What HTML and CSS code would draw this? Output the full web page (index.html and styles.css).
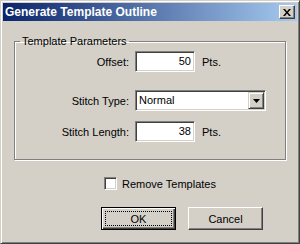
FILE: index.html
```html
<!DOCTYPE html>
<html lang="en">
<head>
  <meta charset="UTF-8" />
  <title>Generate Template Outline</title>
  <link rel="stylesheet" href="styles.css">
</head>
<body>

<div class="window">
  <div class="titlebar">
    <span class="title">Generate Template Outline</span>
    <button class="close-btn" aria-label="Close">
      <svg width="8" height="7" viewBox="0 0 8 7"><path d="M0 0h2l2 2.5 2-2.5h2l-3 3.5 3 3.5h-2l-2-2.5-2 2.5h-2l3-3.5z"/></svg>
    </button>
  </div>

  <div class="dialog-body">
    <fieldset class="group">
      <legend>Template Parameters</legend>

      <div class="field-row field-row-first">
        <label class="field-label">Offset:</label>
        <div class="edit">50</div>
        <span class="unit">Pts.</span>
      </div>

      <div class="field-row field-row-second">
        <label class="field-label">Stitch Type:</label>
        <div class="combo">
          <span class="combo-value">Normal</span>
          <span class="combo-btn">
            <svg width="7" height="4" viewBox="0 0 7 4"><path d="M0 0h7l-3.5 4z"/></svg>
          </span>
        </div>
      </div>

      <div class="field-row">
        <label class="field-label">Stitch Length:</label>
        <div class="edit">38</div>
        <span class="unit">Pts.</span>
      </div>
    </fieldset>

    <label class="check-row">
      <span class="checkbox"></span>
      Remove Templates
    </label>

    <div class="buttons">
      <button class="btn btn-default"><span class="focus-ring">OK</span></button>
      <button class="btn"><span class="btn-label">Cancel</span></button>
    </div>
  </div>
</div>

</body>
</html>
```

FILE: styles.css
```css
body {
  margin: 0;
  background: #d4d0c8;
}

.window {
  width: 300px;
  height: 244px;
  box-sizing: border-box;
  background: #d4d0c8;
  border: 1px solid;
  border-color: #d4d0c8 #404040 #404040 #d4d0c8;
  box-shadow: inset 1px 1px #fff, inset -1px -1px #808080;
  padding: 2px;
  display: flex;
  flex-direction: column;
  font: 11px "Liberation Sans", Arial, sans-serif;
  color: #000;
}

.titlebar {
  height: 18px;
  flex: none;
  display: flex;
  align-items: center;
  justify-content: space-between;
  padding: 0 2px;
  background: linear-gradient(to right, #0a246a, #a6caf0);
}

.title {
  color: #fff;
  font-weight: bold;
  font-size: 12px;
}

.close-btn {
  width: 16px;
  height: 14px;
  padding: 0;
  background: #d4d0c8;
  border: 1px solid;
  border-color: #fff #404040 #404040 #fff;
  box-shadow: inset -1px -1px #808080;
  display: flex;
  align-items: center;
  justify-content: center;
}

.dialog-body {
  display: flex;
  flex-direction: column;
  padding: 0 11px;
}

.group {
  width: 272px;
  box-sizing: border-box;
  margin: 14px 0 0;
  padding: 3px 0 17px;
  border: 1px solid #808080;
  box-shadow: inset 1px 1px #fff, 1px 1px #fff;
}

.group legend {
  margin-left: 5px;
  padding: 0 2px;
  line-height: 13px;
}

.field-row {
  display: flex;
  align-items: center;
  height: 21px;
  margin-bottom: 10px;
}

.field-row:last-child {
  margin-bottom: 0;
}

.field-row-first {
  margin-bottom: 18px;
}

.field-label {
  width: 114px;
  text-align: right;
  margin-right: 6px;
}

.edit,
.combo {
  height: 21px;
  box-sizing: border-box;
  background: #fff;
  border: 1px solid;
  border-color: #808080 #fff #fff #808080;
  box-shadow: inset 1px 1px #404040, inset -1px -1px #d4d0c8;
  padding: 1px;
}

.edit {
  width: 60px;
  text-align: right;
  padding-right: 3px;
  line-height: 17px;
}

.unit {
  margin-left: 7px;
}

.combo {
  width: 131px;
  display: flex;
  align-items: stretch;
}

.combo-value {
  flex: 1;
  padding-left: 2px;
  line-height: 17px;
}

.combo-btn {
  width: 16px;
  box-sizing: border-box;
  background: #d4d0c8;
  border: 1px solid;
  border-color: #d4d0c8 #404040 #404040 #d4d0c8;
  box-shadow: inset 1px 1px #fff, inset -1px -1px #808080;
  display: flex;
  align-items: center;
  justify-content: center;
}

.check-row {
  display: flex;
  align-items: center;
  margin: 17px 0 0 90px;
}

.checkbox {
  width: 13px;
  height: 13px;
  box-sizing: border-box;
  background: #fff;
  border: 1px solid;
  border-color: #808080 #fff #fff #808080;
  box-shadow: inset 1px 1px #404040, inset -1px -1px #d4d0c8;
  margin-right: 5px;
}

.buttons {
  display: flex;
  gap: 12px;
  margin: 17px 0 0 87px;
}

.btn {
  width: 75px;
  height: 23px;
  box-sizing: border-box;
  padding: 3px;
  background: #d4d0c8;
  border: 1px solid;
  border-color: #fff #404040 #404040 #fff;
  box-shadow: inset -1px -1px #808080;
  font: inherit;
  color: #000;
  display: flex;
}

.btn-default {
  border-color: #000;
  box-shadow: inset 1px 1px #fff, inset -1px -1px #404040, inset -2px -2px #808080;
}

.focus-ring,
.btn-label {
  flex: 1;
  display: flex;
  align-items: center;
  justify-content: center;
  border: 1px dotted transparent;
}

.focus-ring {
  border-color: #000;
}
```
